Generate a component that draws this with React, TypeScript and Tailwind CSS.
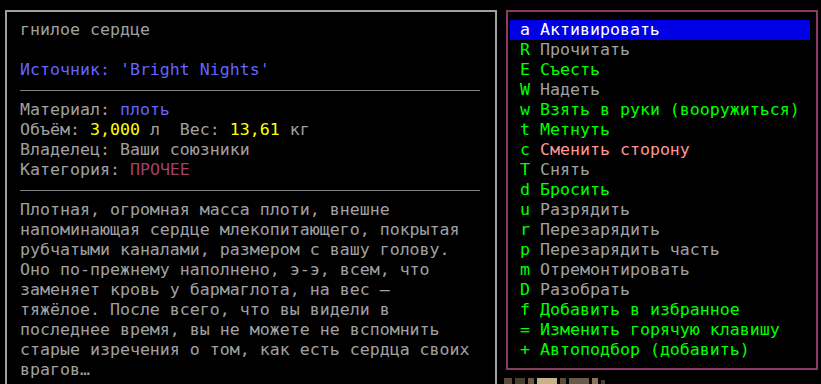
import React from "react";

const mono = { fontFamily: '"DejaVu Sans Mono", "Liberation Mono", monospace' };

const desc = [
  "Плотная, огромная масса плоти, внешне",
  "напоминающая сердце млекопитающего, покрытая",
  "рубчатыми каналами, размером с вашу голову.",
  "Оно по-прежнему наполнено, э-э, всем, что",
  "заменяет кровь у бармаглота, на вес –",
  "тяжёлое. После всего, что вы видели в",
  "последнее время, вы не можете не вспомнить",
  "старые изречения о том, как есть сердца своих",
  "врагов…",
];

type Item = { k: string; label: string; lc: string };
const items: Item[] = [
  { k: "R", label: "Прочитать", lc: "text-[#a0a0a0]" },
  { k: "E", label: "Съесть", lc: "text-[#00ff00]" },
  { k: "W", label: "Надеть", lc: "text-[#a0a0a0]" },
  { k: "w", label: "Взять в руки (вооружиться)", lc: "text-[#00ff00]" },
  { k: "t", label: "Метнуть", lc: "text-[#00ff00]" },
  { k: "c", label: "Сменить сторону", lc: "text-[#ff9696]" },
  { k: "T", label: "Снять", lc: "text-[#a0a0a0]" },
  { k: "d", label: "Бросить", lc: "text-[#00ff00]" },
  { k: "u", label: "Разрядить", lc: "text-[#a0a0a0]" },
  { k: "r", label: "Перезарядить", lc: "text-[#a0a0a0]" },
  { k: "p", label: "Перезарядить часть", lc: "text-[#a0a0a0]" },
  { k: "m", label: "Отремонтировать", lc: "text-[#a0a0a0]" },
  { k: "D", label: "Разобрать", lc: "text-[#a0a0a0]" },
  { k: "f", label: "Добавить в избранное", lc: "text-[#00ff00]" },
  { k: "=", label: "Изменить горячую клавишу", lc: "text-[#00ff00]" },
  { k: "+", label: "Автоподбор (добавить)", lc: "text-[#00ff00]" },
];

export default function App() {
  return (
    <div
      className="relative w-[821px] h-[384px] bg-black overflow-hidden flex items-start text-[16.6px] leading-[20px] whitespace-pre text-[#a0a0a0]"
      style={mono}
    >
      <div className="ml-[5px] mt-[10px] w-[492px] h-[380px] border-2 border-b-0 border-[#a0a0a0] pt-[8px] pl-[13px] pr-[15px] flex flex-col">
        <div className="h-[20px]">гнилое сердце</div>
        <div className="h-[20px]" />
        <div className="h-[20px] text-[#6464ff]">Источник: 'Bright Nights'</div>
        <div className="h-[20px] flex items-center">
          <div className="h-px w-full bg-[#808080]" />
        </div>
        <div className="h-[20px]">
          Материал: <span className="text-[#6464ff]">плоть</span>
        </div>
        <div className="h-[20px]">
          Объём: <span className="text-[#ffff00]">3,000</span> л  Вес: <span className="text-[#ffff00]">13,61</span> кг
        </div>
        <div className="h-[20px]">Владелец: Ваши союзники</div>
        <div className="h-[20px]">
          Категория: <span className="text-[#a0406a]">ПРОЧЕЕ</span>
        </div>
        <div className="h-[20px] flex items-center">
          <div className="h-px w-full bg-[#808080]" />
        </div>
        {desc.map((l, i) => (
          <div key={i} className="h-[20px]">
            {l}
          </div>
        ))}
      </div>

      <div className="ml-[9px] mt-[10px] w-[312px] h-[360px] border-2 border-[#8c3c64] pt-[8px] pl-[2px] pr-[6px] flex flex-col">
        <div className="h-[20px] bg-[#0000e6] pl-[10px] text-white">a Активировать</div>
        {items.map((it) => (
          <div key={it.k + it.label} className="h-[20px] pl-[10px]">
            <span className="text-[#00ff00]">{it.k}</span> <span className={it.lc}>{it.label}</span>
          </div>
        ))}
      </div>

      <div className="absolute left-[504px] top-[378px] flex items-end gap-[3px]">
        <div className="w-[8px] h-[6px] bg-[#5a4a3a]" />
        <div className="w-[10px] h-[6px] bg-[#4a3e30]" />
        <div className="w-[6px] h-[6px] bg-[#6b5a44]" />
        <div className="w-[20px] h-[6px] bg-[#c8b08a]" />
        <div className="w-[6px] h-[6px] bg-[#5a4a38]" />
        <div className="w-[20px] h-[6px] bg-[#6b5a48]" />
        <div className="w-[6px] h-[6px] bg-[#8a7458]" />
        <div className="w-[4px] h-[4px] bg-[#4a3e30]" />
      </div>
    </div>
  );
}
